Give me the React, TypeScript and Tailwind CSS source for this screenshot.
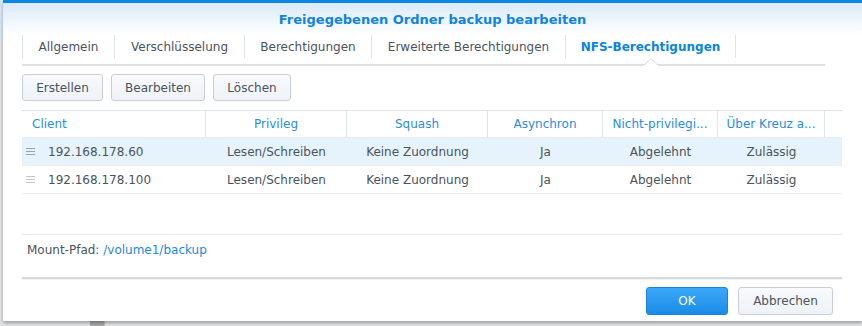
import React from "react";

const font = { fontFamily: '"DejaVu Sans", Verdana, sans-serif' };

const tabs = [
  { label: "Allgemein", w: 92 },
  { label: "Verschlüsselung", w: 130 },
  { label: "Berechtigungen", w: 127 },
  { label: "Erweiterte Berechtigungen", w: 194 },
  { label: "NFS-Berechtigungen", w: 171, active: true },
];

const cols = [
  { label: "Client", w: 184, align: "left" },
  { label: "Privileg", w: 141 },
  { label: "Squash", w: 141 },
  { label: "Asynchron", w: 115 },
  { label: "Nicht-privilegi...", w: 115 },
  { label: "Über Kreuz a...", w: 107 },
  { label: "", w: 17 },
];

const rows = [
  ["192.168.178.60", "Lesen/Schreiben", "Keine Zuordnung", "Ja", "Abgelehnt", "Zulässig"],
  ["192.168.178.100", "Lesen/Schreiben", "Keine Zuordnung", "Ja", "Abgelehnt", "Zulässig"],
];

function Btn({ children, w }: { children: React.ReactNode; w: number }) {
  return (
    <div
      className="h-[27px] flex items-center justify-center rounded-[3px] border border-[#c6cfd8] bg-gradient-to-b from-[#f8fafc] to-[#eef2f6] text-[12px] text-[#4a535c]"
      style={{ width: w }}
    >
      {children}
    </div>
  );
}

export default function App() {
  return (
    <div className="w-[862px] h-[326px] relative overflow-hidden bg-[#e4e6e8]" style={font}>
      {/* background window hints */}
      <div className="absolute left-0 top-0 w-[3px] h-[40px] bg-[#dcebf7]" />
      <div className="absolute left-[90px] top-[318px] w-[14px] h-[8px] bg-[#a9a9a9]" />
      <div className="absolute left-[104px] top-[318px] w-[1px] h-[8px] bg-[#c2c2c2]" />

      {/* dialog */}
      <div className="absolute left-[3px] top-0 w-[859px] h-[321px] bg-white shadow-[0_2px_4px_rgba(0,0,0,0.35)] flex flex-col">
        <div className="h-[3px] bg-[#0a86e2]" />
        <div className="h-[32px] bg-gradient-to-b from-[#d9eaf9] to-white flex items-center justify-center">
          <span className="text-[13px] font-bold text-[#1183de] pt-[2px]">
            Freigegebenen Ordner backup bearbeiten
          </span>
        </div>

        <div className="pl-[19px] flex flex-col">
          {/* tabs */}
          <div className="w-[803px] h-[31px] border-b-2 border-[#e0e0e0] flex relative">
            {tabs.map((t, i) => (
              <div
                key={t.label}
                className={`h-[23px] flex items-center justify-center text-[12px] border-l border-[#dde3e9] ${
                  i === tabs.length - 1 ? "border-r" : ""
                } ${t.active ? "font-bold text-[#0a84e0]" : "text-[#4a535c]"}`}
                style={{ width: t.w }}
              >
                {t.label}
              </div>
            ))}
            <svg
              className="absolute left-[622px] top-[22px]"
              width="14"
              height="9"
              viewBox="0 0 14 9"
            >
              <path d="M0 8.5 L7 1.5 L14 8.5" fill="white" stroke="#d6d6d6" strokeWidth="1" />
              <rect x="0" y="8" width="14" height="1" fill="white" />
            </svg>
          </div>

          {/* toolbar */}
          <div className="flex gap-[8px] mt-[8px]">
            <Btn w={81}>Erstellen</Btn>
            <Btn w={94}>Bearbeiten</Btn>
            <Btn w={78}>Löschen</Btn>
          </div>

          {/* table */}
          <div className="w-[820px] mt-[9px] border-t border-[#dbe5ee]">
            <div className="flex h-[27px] border-b border-[#e6edf3]">
              {cols.map((c, i) => (
                <div
                  key={i}
                  className={`h-full flex items-center text-[12px] text-[#2a8be4] ${
                    i < cols.length - 1 ? "border-r border-[#dde6ee]" : ""
                  } ${c.align === "left" ? "pl-[10px]" : "justify-center"}`}
                  style={{ width: c.w }}
                >
                  {c.label}
                </div>
              ))}
            </div>
            {rows.map((r, ri) => (
              <div
                key={ri}
                className={`flex h-[28px] border-b border-[#ececec] ${ri === 0 ? "bg-[#e6f3fd]" : ""}`}
              >
                {r.map((cell, ci) => (
                  <div
                    key={ci}
                    className={`h-full flex items-center text-[12px] text-[#4a535c] ${
                      ci === 0 ? "" : "justify-center"
                    }`}
                    style={{ width: cols[ci].w }}
                  >
                    {ci === 0 ? (
                      <>
                        <svg width="9" height="8" viewBox="0 0 9 8" className="ml-[4px] mr-[13px]">
                          <rect x="0" y="0" width="9" height="1" fill={ri === 0 ? "#9aa3ab" : "#c2c8ce"} />
                          <rect x="0" y="3" width="9" height="1" fill={ri === 0 ? "#9aa3ab" : "#c2c8ce"} />
                          <rect x="0" y="6" width="9" height="1" fill={ri === 0 ? "#9aa3ab" : "#c2c8ce"} />
                        </svg>
                        {cell}
                      </>
                    ) : (
                      cell
                    )}
                  </div>
                ))}
              </div>
            ))}
            <div className="h-[41px] border-b border-[#e2ebf2]" />
            <div className="h-[29px] flex items-center pl-[5px] text-[12px] text-[#4a535c]">
              Mount-Pfad:&nbsp;<span className="text-[#1f86e0]">/volume1/backup</span>
            </div>
          </div>

          {/* footer */}
          <div className="w-[820px] mt-[13px] h-[2px] bg-[#d8d8d8] shadow-[0_1px_1px_rgba(0,0,0,0.05)]" />
          <div className="w-[811px] flex justify-end gap-[10px] mt-[8px]">
            <div className="w-[82px] h-[28px] flex items-center justify-center rounded-[3px] border border-[#1a84dc] bg-gradient-to-b from-[#3aa8f8] to-[#198be6] text-[12px] text-white">
              OK
            </div>
            <div className="w-[95px] h-[28px] flex items-center justify-center rounded-[3px] border border-[#c6cfd8] bg-gradient-to-b from-[#f8fafc] to-[#eef2f6] text-[12px] text-[#4a535c]">
              Abbrechen
            </div>
          </div>
        </div>
      </div>
    </div>
  );
}
